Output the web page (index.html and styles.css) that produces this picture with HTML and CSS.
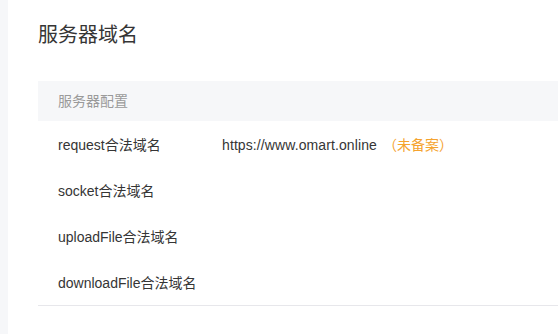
FILE: index.html
```html
<!DOCTYPE html>
<html lang="zh">
<head>
<meta charset="utf-8">
<link rel="stylesheet" href="styles.css">
</head>
<body>
<div class="page">
  <div class="side"></div>
  <main class="card">
    <h1 class="title">服务器域名</h1>
    <div class="table">
      <div class="thead">服务器配置</div>
      <div class="row">
        <div class="label">request合法域名</div>
        <div class="value">https://www.omart.online <span class="warn">（未备案）</span></div>
      </div>
      <div class="row">
        <div class="label">socket合法域名</div>
        <div class="value"></div>
      </div>
      <div class="row">
        <div class="label">uploadFile合法域名</div>
        <div class="value"></div>
      </div>
      <div class="row">
        <div class="label">downloadFile合法域名</div>
        <div class="value"></div>
      </div>
    </div>
  </main>
</div>
</body>
</html>
```

FILE: styles.css
```css
* { box-sizing: border-box; }
html, body { margin: 0; padding: 0; background: #fff; }
body {
  font-family: "Liberation Sans", Arial, "Noto Sans CJK SC", sans-serif;
  color: #353535;
  width: 558px;
  height: 334px;
  overflow: hidden;
}
.page { display: flex; height: 334px; }
.side { width: 8px; background: #f6f7f9; flex: none; }
.card { flex: 1; background: #fff; padding: 23px 0 0 30px; }
.title {
  margin: 0;
  font-size: 20px;
  font-weight: normal;
  line-height: 24px;
  color: #353535;
}
.table { margin-top: 34px; border-bottom: 1px solid #e7e7eb; }
.thead {
  height: 40px;
  line-height: 40px;
  background: #f6f7f9;
  padding-left: 20px;
  font-size: 14px;
  color: #9a9a9a;
}
.row { display: flex; height: 46px; align-items: center; font-size: 14px; }
.label { width: 184px; padding-left: 20px; flex: none; }
.value { flex: 1; letter-spacing: 0.1px; }
.warn { color: #f5a32f; margin-left: 2px; letter-spacing: 0; }
```
